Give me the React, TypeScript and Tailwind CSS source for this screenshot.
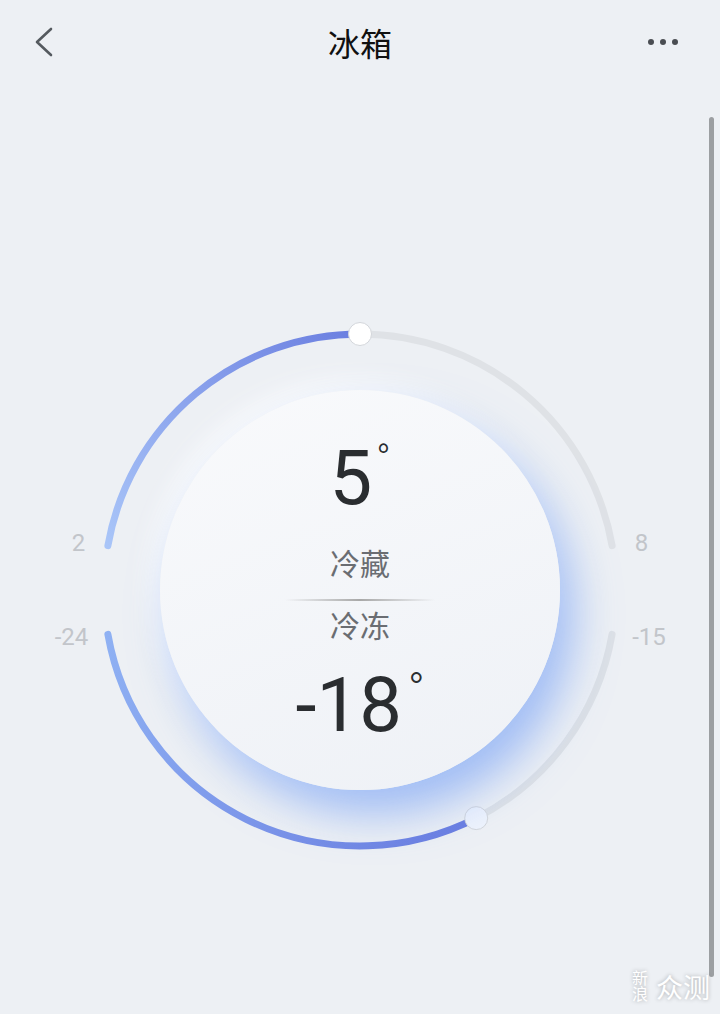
const CJK = "font-['Noto_Sans_CJK_SC',sans-serif]";
const NUM = "font-['Roboto','Noto_Sans_CJK_SC',sans-serif]";

function Dial() {
  return (
    <svg
      className="absolute inset-0"
      width="720"
      height="600"
      viewBox="0 0 720 600"
      fill="none"
    >
      <defs>
        <linearGradient id="upper" gradientUnits="userSpaceOnUse" x1="108" y1="256" x2="360" y2="44">
          <stop offset="0" stopColor="#a9c5f8" />
          <stop offset="1" stopColor="#6a7ee0" />
        </linearGradient>
        <linearGradient id="lower" gradientUnits="userSpaceOnUse" x1="108" y1="344" x2="476" y2="528">
          <stop offset="0" stopColor="#8fb1f3" />
          <stop offset="1" stopColor="#6a7de0" />
        </linearGradient>
      </defs>
      <path d="M360 44 A256 256 0 0 1 612.1 255.6" stroke="#dfe2e6" strokeWidth="7" strokeLinecap="round" />
      <path d="M476.2 528.1 A256 256 0 0 0 612.1 344.4" stroke="#dde1e6" strokeWidth="7" strokeLinecap="round" />
      <path d="M107.9 255.6 A256 256 0 0 1 360 44" stroke="url(#upper)" strokeWidth="7" strokeLinecap="round" />
      <path d="M107.9 344.4 A256 256 0 0 0 476.2 528.1" stroke="url(#lower)" strokeWidth="7" strokeLinecap="round" />
      <circle cx="360" cy="44" r="11.5" fill="#ffffff" stroke="#d3d6db" strokeWidth="1" />
      <circle cx="476.2" cy="528.1" r="11.5" fill="#eef3fc" stroke="#d3d6db" strokeWidth="1" />
      <g fill="#c2c5ca" fontSize="24" fontFamily="Roboto, sans-serif" textAnchor="middle">
        <text x="78.5" y="261">2</text>
        <text x="71.5" y="355">-24</text>
        <text x="641.5" y="261">8</text>
        <text x="649" y="355">-15</text>
      </g>
    </svg>
  );
}

function Temp({ value, big }: { value: string; big?: boolean }) {
  return (
    <div className={`flex items-start text-[#2a2d30] ${NUM}`}>
      <span className="text-[76px] leading-none font-normal">{value}</span>
      <span className={`${big ? "text-[44px] ml-[6px]" : "text-[38px] ml-[4px]"} leading-none font-light`}>°</span>
    </div>
  );
}

export default function App() {
  return (
    <div className="relative w-[720px] h-[1014px] overflow-hidden bg-[#edf0f4]">
      <header className="h-[84px] flex items-center justify-between px-[34px]">
        <div className="w-[100px]">
          <svg width="20" height="30" viewBox="0 0 20 30" fill="none">
            <path d="M17 2 L3 15 L17 28" stroke="#555a5f" strokeWidth="2.6" strokeLinecap="round" strokeLinejoin="round" />
          </svg>
        </div>
        <h1 className={`${CJK} text-[32px] leading-none text-[#111]`}>冰箱</h1>
        <div className="w-[100px] flex justify-end gap-[6px] pr-[8px]">
          <span className="w-[6px] h-[6px] rounded-full bg-[#4a4d52]" />
          <span className="w-[6px] h-[6px] rounded-full bg-[#4a4d52]" />
          <span className="w-[6px] h-[6px] rounded-full bg-[#4a4d52]" />
        </div>
      </header>

      <main className="mt-[206px]">
        <div className="relative w-[720px] h-[600px] flex items-center justify-center">
          <Dial />
          <div className="relative w-[400px] h-[400px] rounded-full bg-[linear-gradient(160deg,#f9fafc,#eef1f6)] shadow-[14px_24px_44px_rgba(96,146,246,0.55),-10px_-10px_26px_rgba(255,255,255,0.75)] flex flex-col items-center">
            <div className="mt-[50px]">
              <Temp value="5" />
            </div>
            <div className={`${CJK} mt-[31px] text-[30px] leading-none text-[#6a6d72]`}>冷藏</div>
            <div className="mt-[22px] w-[150px] h-[2px] bg-[linear-gradient(90deg,rgba(160,160,160,0),#a8a8a8,rgba(160,160,160,0))]" />
            <div className={`${CJK} mt-[8px] text-[30px] leading-none text-[#6a6d72]`}>冷冻</div>
            <div className="mt-[28px]">
              <Temp value="-18" big />
            </div>
          </div>
        </div>
      </main>

      <div className="absolute right-[6px] top-[117px] w-[5px] h-[860px] rounded-full bg-[#9c9fa2]" />

      <div className={`absolute right-[10px] bottom-[12px] flex items-center gap-[8px] text-white ${CJK} [text-shadow:0_0_4px_rgba(0,0,0,0.3)]`}>
        <span className="text-[16px] leading-none [writing-mode:vertical-rl]">新浪</span>
        <span className="text-[27px] leading-none">众测</span>
      </div>
    </div>
  );
}
